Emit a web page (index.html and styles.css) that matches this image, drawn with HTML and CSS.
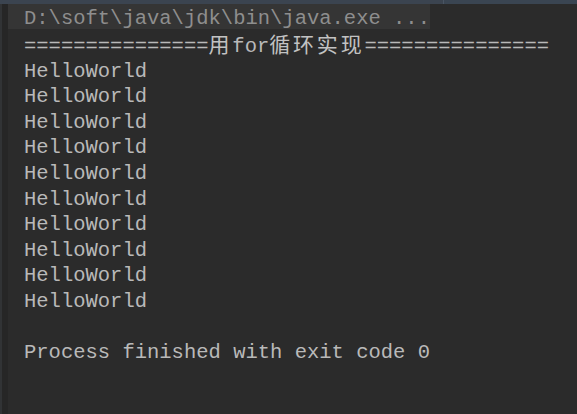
FILE: index.html
```html
<!DOCTYPE html>
<html>
<head>
<meta charset="utf-8">
<link rel="stylesheet" href="styles.css">
</head>
<body>
<div class="topbar"><div class="tab"></div><div class="tab-rest"></div></div>
<div class="console">
  <div class="gutter"></div>
  <div class="output">
    <div class="line cmd">D:\soft\java\jdk\bin\java.exe ...</div>
    <div class="line sep">===============<span class="cjk">用</span>for<span class="cjk">循环实现</span>===============</div>
    <div class="line">HelloWorld</div>
    <div class="line">HelloWorld</div>
    <div class="line">HelloWorld</div>
    <div class="line">HelloWorld</div>
    <div class="line">HelloWorld</div>
    <div class="line">HelloWorld</div>
    <div class="line">HelloWorld</div>
    <div class="line">HelloWorld</div>
    <div class="line">HelloWorld</div>
    <div class="line">HelloWorld</div>
    <div class="line">&nbsp;</div>
    <div class="line">Process finished with exit code 0</div>
  </div>
</div>
</body>
</html>
```

FILE: styles.css
```css
html, body {
  margin: 0;
  padding: 0;
  background: #2b2b2b;
  height: 100%;
  overflow: hidden;
}
.topbar {
  display: flex;
  height: 4px;
}
.tab {
  width: 443px;
  background: #3b4450;
  border-right: 1px solid #4a5563;
}
.tab-rest {
  flex: 1;
  background: #3a4552;
}
.console {
  display: flex;
  height: 410px;
}
.gutter {
  width: 8px;
  background: #262626;
  border-left: 2px solid #313335;
  box-sizing: border-box;
}
.output {
  flex: 1;
  font-family: "Liberation Mono", monospace;
  font-size: 20.5px;
  line-height: 25.6px;
  color: #b9b9b9;
}
.line {
  padding-left: 16px;
  white-space: pre;
  height: 25.6px;
}
.cmd {
  background: #353535;
  width: 406px;
  color: #8e8e8e;
  padding-top: 5px;
  height: 20px;
  line-height: 20px;
}
.sep {
  padding-top: 4px;
}
.cjk {
  font-family: "Noto Sans CJK SC", sans-serif;
  font-size: 21px;
  line-height: 1;
  letter-spacing: 2.8px;
  color: #c2c2c2;
}
```
